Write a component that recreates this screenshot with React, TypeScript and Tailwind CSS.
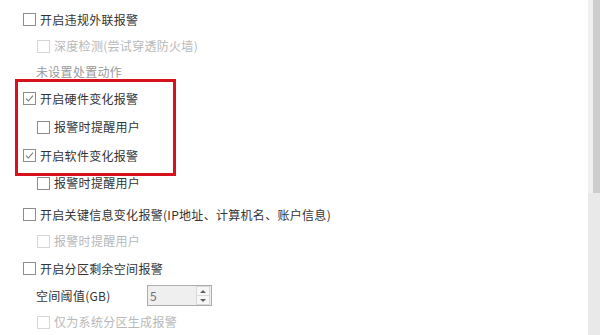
import React from 'react';

type BoxProps = { checked?: boolean; disabled?: boolean };

const Box: React.FC<BoxProps> = ({ checked, disabled }) => (
  <span
    className={`flex h-[13px] w-[13px] shrink-0 items-center justify-center border bg-white ${
      disabled ? 'border-[#d6d6d6]' : 'border-[#8c8c8c]'
    }`}
  >
    {checked && (
      <svg width="9" height="9" viewBox="0 0 9 9" fill="none">
        <path d="M1 4.6 L3.4 7 L8 1.6" stroke="#7a7a7a" strokeWidth="1.1" />
      </svg>
    )}
  </span>
);

type RowProps = {
  label: string;
  checked?: boolean;
  disabled?: boolean;
  sub?: boolean;
  className?: string;
};

const Row: React.FC<RowProps> = ({ label, checked, disabled, sub, className }) => (
  <div className={`flex h-[26px] items-center gap-[4px] ${sub ? 'pl-[14px]' : ''} ${className ?? ''}`}>
    <Box checked={checked} disabled={disabled} />
    <span className={`tracking-[0.3px] ${disabled ? 'text-[#b8b8b8]' : 'text-[#333333]'}`}>{label}</span>
  </div>
);

const App: React.FC = () => {
  return (
    <div
      className="relative flex h-[335px] w-[600px] overflow-hidden bg-white text-[12px]"
      style={{ fontFamily: '"Microsoft YaHei", "Noto Sans CJK SC", sans-serif' }}
    >
      <div className="flex flex-1 flex-col pl-[23px] pt-[7px]">
        <Row label="开启违规外联报警" />
        <Row label="深度检测(尝试穿透防火墙)" sub disabled className="mt-[1px]" />
        <div className="flex h-[26px] items-center pl-[13px] tracking-[0.3px] text-[#9a9a9a]">未设置处置动作</div>
        <Row label="开启硬件变化报警" checked className="mt-[1px]" />
        <Row label="报警时提醒用户" sub className="mt-[3px]" />
        <Row label="开启软件变化报警" checked className="mt-[3px]" />
        <Row label="报警时提醒用户" sub className="mt-[2px]" />
        <Row label="开启关键信息变化报警(IP地址、计算机名、账户信息)" className="mt-[6px]" />
        <Row label="报警时提醒用户" sub disabled className="mt-[1px]" />
        <Row label="开启分区剩余空间报警" className="mt-[2px]" />
        <div className="mt-[1px] flex h-[26px] items-center pl-[13px] text-[#333333]">
          <span className="w-[111px] tracking-[0.3px]">空间阈值(GB)</span>
          <div className="flex h-[21px] w-[65px] items-center justify-between border border-[#acacac] bg-[#efefef] pl-[2px] pr-[1px]">
            <span className="text-[#6f6f6f]">5</span>
            <div className="flex h-[19px] w-[14px] flex-col">
              <span className="flex flex-1 items-center justify-center border border-[#d9d9d9] bg-[#f7f7f7]">
                <svg width="6" height="3" viewBox="0 0 6 3"><path d="M0 3 L3 0 L6 3 Z" fill="#606060" /></svg>
              </span>
              <span className="flex flex-1 items-center justify-center border border-t-0 border-[#d9d9d9] bg-[#f7f7f7]">
                <svg width="6" height="3" viewBox="0 0 6 3"><path d="M0 0 L6 0 L3 3 Z" fill="#606060" /></svg>
              </span>
            </div>
          </div>
        </div>
        <Row label="仅为系统分区生成报警" sub disabled className="mt-[1px]" />
      </div>

      {/* scrollbar */}
      <div className="flex w-[12px] flex-col bg-[#e9e9e9]">
        <div className="flex h-[193px]">
          <div className="w-[5px] bg-[#f0f0f0]" />
          <div className="flex-1 bg-[#cdcdcd]" />
        </div>
      </div>

      {/* highlight overlay */}
      <div className="pointer-events-none absolute left-[15px] top-[79px] h-[97px] w-[161px] border-[3px] border-[#d6121e]" />
    </div>
  );
};

export default App;
